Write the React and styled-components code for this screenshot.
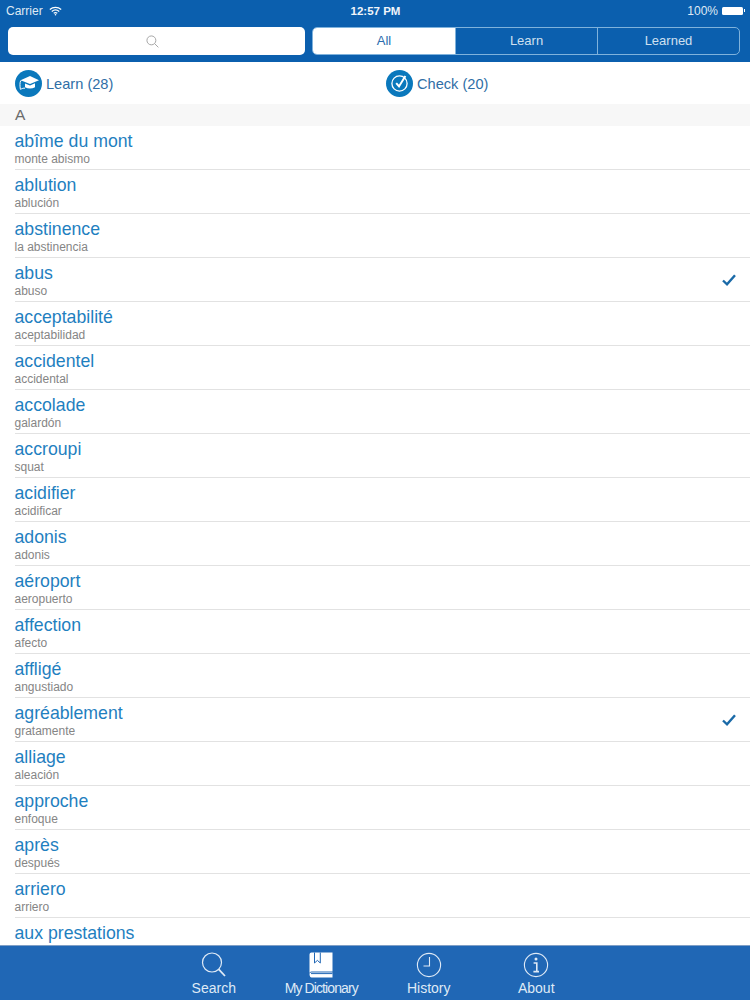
import styled, { createGlobalStyle } from "styled-components";

const GlobalStyle = createGlobalStyle`
  html, body {
    margin: 0;
    padding: 0;
    background: #fff;
    font-family: "Liberation Sans", Arial, sans-serif;
  }
`;

const words = [
  ["abîme du mont", "monte abismo"],
  ["ablution", "ablución"],
  ["abstinence", "la abstinencia"],
  ["abus", "abuso", true],
  ["acceptabilité", "aceptabilidad"],
  ["accidentel", "accidental"],
  ["accolade", "galardón"],
  ["accroupi", "squat"],
  ["acidifier", "acidificar"],
  ["adonis", "adonis"],
  ["aéroport", "aeropuerto"],
  ["affection", "afecto"],
  ["affligé", "angustiado"],
  ["agréablement", "gratamente", true],
  ["alliage", "aleación"],
  ["approche", "enfoque"],
  ["après", "después"],
  ["arriero", "arriero"],
  ["aux prestations", ""],
];

export default function App() {
  return (
    <Page>
      <GlobalStyle />
      <Header>
        <StatusBar>
          <StatusSide>
            Carrier
            <svg width="13" height="10" viewBox="0 0 16 12" fill="none" stroke="#fff" strokeWidth="1.5">
              <path d="M1 4.2C5 .6 11 .6 15 4.2" />
              <path d="M3.4 6.6c2.7-2.3 6.5-2.3 9.2 0" />
              <path d="M5.8 8.8c1.3-1 3.1-1 4.4 0" />
              <circle cx="8" cy="10.6" r="1" fill="#fff" stroke="none" />
            </svg>
          </StatusSide>
          <Clock>12:57 PM</Clock>
          <StatusRight>
            100%
            <Battery />
          </StatusRight>
        </StatusBar>
        <Controls>
          <SearchField>
            <svg width="13" height="13" viewBox="0 0 14 14" fill="none" stroke="#a0a0a0" strokeWidth="1">
              <circle cx="5.8" cy="5.8" r="4.8" />
              <path d="M9.3 9.3l4 4" />
            </svg>
          </SearchField>
          <Segments>
            <Segment $active>All</Segment>
            <Segment>Learn</Segment>
            <Segment>Learned</Segment>
          </Segments>
        </Controls>
      </Header>

      <Actions>
        <Action>
          <ActionIcon>
            <svg width="22" height="18" viewBox="0 0 22 18" fill="none">
              <path d="M12 2L21 6.2 12 10 4.5 7C3.4 6.6 2.6 6.4 2 6.6z" fill="#fff" />
              <path d="M7 9.4v3.8c3 1.6 7 1.6 10 0V9.2L12 11.4z" fill="#fff" />
              <path d="M2.6 6.8c-.8 2-.8 5-.2 8.6M2.6 15.4c1.4-1 3-1.4 4.4-1.2" stroke="#fff" strokeWidth="1" />
            </svg>
          </ActionIcon>
          <ActionLabel>Learn (28)</ActionLabel>
        </Action>
        <Action>
          <ActionIcon>
            <svg width="20" height="20" viewBox="0 0 20 20" fill="none" stroke="#fff">
              <circle cx="9.5" cy="10.5" r="7.6" strokeWidth="1.3" />
              <path d="M6.2 10.2l2.8 3.2L15.4 3" strokeWidth="2" />
            </svg>
          </ActionIcon>
          <ActionLabel>Check (20)</ActionLabel>
        </Action>
      </Actions>

      <SectionHeader>A</SectionHeader>

      <List>
        {words.map(([word, translation, checked]) => (
          <Row key={word}>
            <RowText>
              <Word>{word}</Word>
              <Translation>{translation}</Translation>
            </RowText>
            {checked && (
              <svg width="14" height="12" viewBox="0 0 14 12" fill="none" stroke="#1a6aa8" strokeWidth="2.4">
                <path d="M1 6.5l4 3.8L13 1.2" />
              </svg>
            )}
          </Row>
        ))}
      </List>

      <TabBar>
        <Tab>
          <svg width="26" height="26" viewBox="0 0 26 26" fill="none" stroke="#dfeaf6" strokeWidth="1.2">
            <circle cx="11" cy="10.5" r="9.5" />
            <path d="M17.8 17.4l6.2 6.6" strokeWidth="1.8" />
          </svg>
          <TabLabel>Search</TabLabel>
        </Tab>
        <Tab>
          <svg width="26" height="26" viewBox="0 0 26 26" fill="none">
            <path d="M1.5 2.5a2 2 0 0 1 2-2h21v19H3.5a2 2 0 0 0-2 2z" fill="#fff" />
            <path d="M1.5 22c0-1 1-1.5 2-1.5h21v5H3.5c-1 0-2-1-2-3.5z" fill="#fff" />
            <path d="M3 21.6h21.5" stroke="#2067b5" strokeWidth="1" />
            <path d="M6.5 .5v10.5l2.9-2.6 2.9 2.6V.5" stroke="#2067b5" strokeWidth="1" />
          </svg>
          <TabLabel $tight>My Dictionary</TabLabel>
        </Tab>
        <Tab>
          <svg width="26" height="26" viewBox="0 0 26 26" fill="none" stroke="#dfeaf6" strokeWidth="1.1">
            <circle cx="13" cy="13" r="11.6" />
            <path d="M13.5 5v9H7.5" />
          </svg>
          <TabLabel>History</TabLabel>
        </Tab>
        <Tab>
          <svg width="26" height="26" viewBox="0 0 26 26" fill="none" stroke="#dfeaf6" strokeWidth="1.1">
            <circle cx="13" cy="13" r="11.6" />
            <circle cx="13" cy="7" r="1.5" fill="#dfeaf6" stroke="none" />
            <path d="M10.6 11h3.2v8.4M10.4 19.6h5.6" strokeWidth="1.6" />
          </svg>
          <TabLabel>About</TabLabel>
        </Tab>
      </TabBar>
    </Page>
  );
}

const Page = styled.div`
  display: flex;
  flex-direction: column;
  width: 750px;
  height: 1000px;
  overflow: hidden;
`;

const Header = styled.header`
  flex: none;
  height: 62px;
  background: #0b5fae;
  color: #fff;
`;

const StatusBar = styled.div`
  display: grid;
  grid-template-columns: 1fr auto 1fr;
  align-items: center;
  height: 21px;
  padding: 0 5px 0 6px;
  font-size: 12px;
`;

const StatusSide = styled.div`
  display: flex;
  align-items: center;
  gap: 6px;
  color: #dfe9f4;
`;

const Clock = styled.div`
  font-weight: 700;
  font-size: 11.5px;
  color: #f0f5fa;
`;

const StatusRight = styled.div`
  display: flex;
  align-items: center;
  justify-content: flex-end;
  gap: 4px;
  color: #dfe9f4;
`;

const Battery = styled.span`
  position: relative;
  width: 21px;
  height: 8px;
  margin-right: 2px;
  background: #fff;
  border-radius: 1.5px;

  &::after {
    content: "";
    position: absolute;
    right: -2px;
    top: 2.5px;
    width: 1px;
    height: 3px;
    background: #fff;
  }
`;

const Controls = styled.div`
  display: flex;
  gap: 7px;
  padding: 6px 10px 0 8px;
`;

const SearchField = styled.div`
  display: flex;
  align-items: center;
  justify-content: center;
  box-sizing: border-box;
  padding-right: 9px;
  width: 297px;
  height: 28px;
  background: #fff;
  border-radius: 5px;
`;

const Segments = styled.div`
  display: grid;
  grid-template-columns: 142px 142px 1fr;
  flex: 1;
  height: 28px;
  box-sizing: border-box;
  border: 1px solid #7fb2dc;
  border-radius: 5px;
  overflow: hidden;
`;

const Segment = styled.div`
  display: flex;
  align-items: center;
  justify-content: center;
  padding-bottom: 1px;
  font-size: 13px;
  color: ${(props) => (props.$active ? "#2a6cae" : "#cfe0f0")};
  background: ${(props) => (props.$active ? "#fff" : "transparent")};
  border-left: ${(props) => (props.$active ? "none" : "1px solid #7fb2dc")};
`;

const Actions = styled.div`
  display: grid;
  grid-template-columns: 371px 1fr;
  flex: none;
  height: 42px;
  padding-left: 15px;
  align-items: center;
`;

const Action = styled.div`
  display: flex;
  align-items: center;
  gap: 4px;
`;

const ActionLabel = styled.span`
  padding-top: 1px;
  font-size: 14.6px;
  color: #2f6ea6;
`;

const ActionIcon = styled.span`
  display: flex;
  align-items: center;
  justify-content: center;
  width: 27px;
  height: 27px;
  border-radius: 50%;
  background: #0a78bc;
`;

const SectionHeader = styled.div`
  flex: none;
  height: 22px;
  line-height: 22px;
  padding-left: 15px;
  background: #f7f7f7;
  color: #6b6b6b;
  font-size: 15.5px;
`;

const List = styled.div`
  flex: 1;
  min-height: 0;
  overflow: hidden;
  padding-left: 14.5px;
`;

const Row = styled.div`
  display: flex;
  align-items: center;
  justify-content: space-between;
  box-sizing: border-box;
  height: 44px;
  padding-right: 14px;
  border-bottom: 1px solid #e2e2e2;
`;

const RowText = styled.div`
  display: flex;
  flex-direction: column;
  align-self: flex-start;
`;

const Word = styled.div`
  font-size: 17.7px;
  line-height: 22px;
  margin-top: 3.5px;
  color: #1f80bf;
`;

const Translation = styled.div`
  font-size: 12px;
  line-height: 14px;
  margin-top: 0.5px;
  color: #858585;
`;

const TabBar = styled.nav`
  display: flex;
  flex: none;
  justify-content: center;
  height: 55px;
  box-sizing: border-box;
  background: #2067b5;
  border-top: 1px solid #7f9fc6;
`;

const Tab = styled.div`
  display: flex;
  flex-direction: column;
  align-items: center;
  width: 107.5px;
  padding-top: 6px;
`;

const TabLabel = styled.span`
  margin-top: 2px;
  font-size: 14px;
  line-height: 17px;
  color: #dfeaf6;
  white-space: nowrap;
  letter-spacing: ${(props) => (props.$tight ? "-0.9px" : "0")};
`;
